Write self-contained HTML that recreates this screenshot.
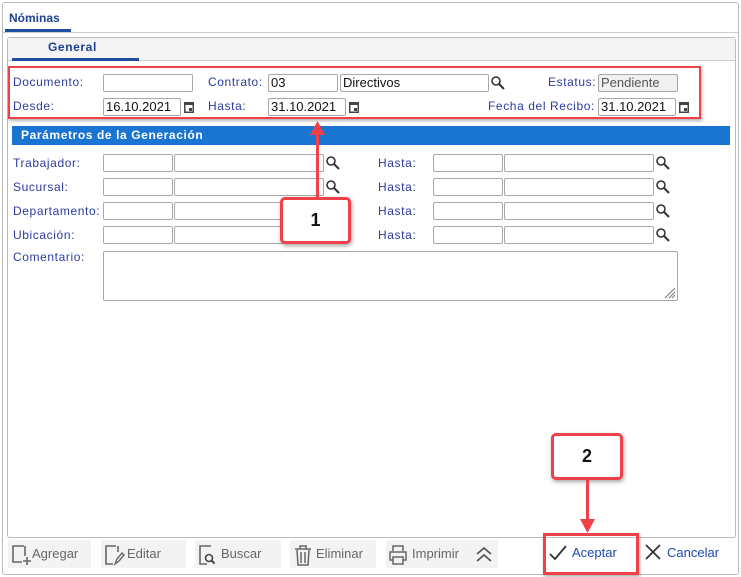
<!DOCTYPE html><html><head><style>
*{box-sizing:border-box;margin:0;padding:0}
body{width:741px;height:577px;background:#fff;position:relative;overflow:hidden;font-family:"Liberation Sans",sans-serif;font-size:12px}
.a{position:absolute}
.l{position:absolute;color:#2b3c9f;letter-spacing:0.6px;font-size:12px}
.i{position:absolute;border:1px solid #a8a8a8;border-radius:2px;background:#fff;height:18px;font-size:13px;padding-left:2px;line-height:16px;color:#111}
.btn{position:absolute;top:540px;height:28px;background:#f3f3f3;color:#666;font-size:13px;line-height:28px}
</style></head><body>
<div class="a" style="left:2px;top:2px;width:737px;height:573px;border:1px solid #bbb;border-radius:3px"></div>
<div class="a" style="left:9px;top:11px;font-weight:bold;color:#1f3f8f;font-size:12px">Nóminas</div>
<div class="a" style="left:5px;top:29px;width:66px;height:3px;background:#1f4ea0"></div>
<div class="a" style="left:3px;top:32px;width:735px;height:1px;background:#ccc"></div>
<div class="a" style="left:7px;top:37px;width:729px;height:501px;border:1px solid #bbb;border-radius:3px"></div>
<div class="a" style="left:8px;top:38px;width:727px;height:23px;background:#f4f4f4;border-bottom:1px solid #ccc"></div>
<div class="a" style="left:48px;top:40px;font-weight:bold;color:#1f3f8f;letter-spacing:0.6px">General</div>
<div class="a" style="left:12px;top:58px;width:127px;height:3px;background:#1f4ea0"></div>
<div class="a" style="left:8px;top:66px;width:693px;height:53px;border:2px solid #f04048;box-shadow:1px 2px 3px rgba(0,0,0,.3)"></div>
<div class="l" style="left:13px;top:75px">Documento:</div>
<div class="i" style="left:103px;top:74px;width:90px"></div>
<div class="l" style="left:208px;top:75px">Contrato:</div>
<div class="i" style="left:268px;top:74px;width:70px">03</div>
<div class="i" style="left:340px;top:74px;width:149px">Directivos</div>
<svg class="a" style="left:490px;top:75px" width="16" height="16"><circle cx="6" cy="6" r="4" fill="none" stroke="#333" stroke-width="1.6"/><path d="M9 9l5 5" stroke="#333" stroke-width="2"/></svg>
<div class="l" style="left:548px;top:75px">Estatus:</div>
<div class="i" style="left:598px;top:74px;width:80px;background:#f0f0f0;color:#555">Pendiente</div>
<div class="l" style="left:13px;top:99px">Desde:</div>
<div class="i" style="left:103px;top:98px;width:78px">16.10.2021</div>
<div class="l" style="left:208px;top:99px">Hasta:</div>
<div class="i" style="left:268px;top:98px;width:78px">31.10.2021</div>
<div class="l" style="left:488px;top:99px">Fecha del Recibo:</div>
<div class="i" style="left:598px;top:98px;width:78px">31.10.2021</div>
<svg class="a" style="left:183px;top:100px" width="12" height="14"><rect x="1" y="2" width="10" height="11" fill="#444"/><rect x="2.5" y="5" width="7" height="6.5" fill="#fff"/><rect x="6" y="8" width="3" height="3" fill="#444"/></svg>
<svg class="a" style="left:348px;top:100px" width="12" height="14"><rect x="1" y="2" width="10" height="11" fill="#444"/><rect x="2.5" y="5" width="7" height="6.5" fill="#fff"/><rect x="6" y="8" width="3" height="3" fill="#444"/></svg>
<svg class="a" style="left:678px;top:100px" width="12" height="14"><rect x="1" y="2" width="10" height="11" fill="#444"/><rect x="2.5" y="5" width="7" height="6.5" fill="#fff"/><rect x="6" y="8" width="3" height="3" fill="#444"/></svg>
<div class="a" style="left:12px;top:126px;width:718px;height:19px;background:#1a75d2;color:#fff;font-weight:bold;padding-left:9px;line-height:19px;letter-spacing:0.6px">Parámetros de la Generación</div>
<div class="l" style="left:13px;top:156px">Trabajador:</div>
<div class="l" style="left:13px;top:180px">Sucursal:</div>
<div class="l" style="left:13px;top:204px">Departamento:</div>
<div class="l" style="left:13px;top:228px">Ubicación:</div>
<div class="l" style="left:13px;top:250px">Comentario:</div>
<div class="i" style="left:103px;top:154px;width:70px"></div><div class="i" style="left:174px;top:154px;width:150px"></div>
<div class="i" style="left:103px;top:178px;width:70px"></div><div class="i" style="left:174px;top:178px;width:150px"></div>
<div class="i" style="left:103px;top:202px;width:70px"></div><div class="i" style="left:174px;top:202px;width:150px"></div>
<div class="i" style="left:103px;top:226px;width:70px"></div><div class="i" style="left:174px;top:226px;width:150px"></div>
<svg class="a" style="left:325px;top:155px" width="16" height="16"><circle cx="6" cy="6" r="4" fill="none" stroke="#333" stroke-width="1.6"/><path d="M9 9l5 5" stroke="#333" stroke-width="2"/></svg>
<svg class="a" style="left:325px;top:179px" width="16" height="16"><circle cx="6" cy="6" r="4" fill="none" stroke="#333" stroke-width="1.6"/><path d="M9 9l5 5" stroke="#333" stroke-width="2"/></svg>
<div class="l" style="left:378px;top:156px">Hasta:</div>
<div class="l" style="left:378px;top:180px">Hasta:</div>
<div class="l" style="left:378px;top:204px">Hasta:</div>
<div class="l" style="left:378px;top:228px">Hasta:</div>
<div class="i" style="left:433px;top:154px;width:70px"></div><div class="i" style="left:504px;top:154px;width:150px"></div>
<div class="i" style="left:433px;top:178px;width:70px"></div><div class="i" style="left:504px;top:178px;width:150px"></div>
<div class="i" style="left:433px;top:202px;width:70px"></div><div class="i" style="left:504px;top:202px;width:150px"></div>
<div class="i" style="left:433px;top:226px;width:70px"></div><div class="i" style="left:504px;top:226px;width:150px"></div>
<svg class="a" style="left:655px;top:155px" width="16" height="16"><circle cx="6" cy="6" r="4" fill="none" stroke="#333" stroke-width="1.6"/><path d="M9 9l5 5" stroke="#333" stroke-width="2"/></svg>
<svg class="a" style="left:655px;top:179px" width="16" height="16"><circle cx="6" cy="6" r="4" fill="none" stroke="#333" stroke-width="1.6"/><path d="M9 9l5 5" stroke="#333" stroke-width="2"/></svg>
<svg class="a" style="left:655px;top:203px" width="16" height="16"><circle cx="6" cy="6" r="4" fill="none" stroke="#333" stroke-width="1.6"/><path d="M9 9l5 5" stroke="#333" stroke-width="2"/></svg>
<svg class="a" style="left:655px;top:227px" width="16" height="16"><circle cx="6" cy="6" r="4" fill="none" stroke="#333" stroke-width="1.6"/><path d="M9 9l5 5" stroke="#333" stroke-width="2"/></svg>
<div class="i" style="left:103px;top:251px;width:575px;height:50px"></div>
<svg class="a" style="left:662px;top:285px" width="14" height="14"><path d="M13 3L3 13M13 7L7 13M13 10L10 13" stroke="#777"/></svg>
<!-- callout 1 -->
<div class="a" style="left:316px;top:134px;width:3px;height:64px;background:#f04048"></div>
<svg class="a" style="left:309px;top:120px" width="17" height="16"><path d="M8.5 1L16 15H1z" fill="#f04048"/></svg>
<div class="a" style="left:280px;top:197px;width:71px;height:47px;border:3px solid #f04048;border-radius:5px;background:#fff;box-shadow:1px 2px 4px rgba(0,0,0,.35);text-align:center;line-height:41px;font-weight:bold;font-size:18px;color:#111">1</div>
<!-- callout 2 -->
<div class="a" style="left:551px;top:433px;width:72px;height:47px;border:3px solid #f04048;border-radius:5px;background:#fff;box-shadow:1px 2px 4px rgba(0,0,0,.35);text-align:center;line-height:41px;font-weight:bold;font-size:18px;color:#111">2</div>
<div class="a" style="left:586px;top:480px;width:3px;height:40px;background:#f04048"></div>
<svg class="a" style="left:579px;top:518px" width="17" height="16"><path d="M1 1H16L8.5 15z" fill="#f04048"/></svg>
<!-- toolbar -->
<div class="btn" style="left:8px;width:83px"><svg class="a" style="left:2px;top:3px" width="22" height="24"><path d="M14 3H3v16h9" fill="none" stroke="#666" stroke-width="1.6"/><path d="M15 3v10M17 14v8M13 18h8" stroke="#666" stroke-width="1.6"/></svg><span class="a" style="left:24px">Agregar</span></div>
<div class="btn" style="left:101px;width:85px"><svg class="a" style="left:2px;top:3px" width="22" height="24"><path d="M13 3H3v18h7M15 3v6" fill="none" stroke="#666" stroke-width="1.6"/><path d="M12 21l2-5 5-6 2 2-5 6z" fill="none" stroke="#666" stroke-width="1.4"/></svg><span class="a" style="left:26px">Editar</span></div>
<div class="btn" style="left:195px;width:86px"><svg class="a" style="left:2px;top:3px" width="22" height="24"><path d="M14 3H3v18h7" fill="none" stroke="#666" stroke-width="1.6"/><circle cx="12" cy="15" r="3.5" fill="none" stroke="#444" stroke-width="1.6"/><path d="M14.5 17.5l3 3" stroke="#444" stroke-width="2"/></svg><span class="a" style="left:26px">Buscar</span></div>
<div class="btn" style="left:290px;width:86px"><svg class="a" style="left:2px;top:3px" width="22" height="24"><path d="M3 6h16M8 6V3h6v3M5 7l1 15h10l1-15M9 9v11M13 9v11" fill="none" stroke="#666" stroke-width="1.5"/></svg><span class="a" style="left:26px">Eliminar</span></div>
<div class="btn" style="left:386px;width:84px"><svg class="a" style="left:1px;top:3px" width="22" height="24"><path d="M6 8V3h10v5M6 17H3V9h16v8h-3M6 14h10v7H6z" fill="none" stroke="#666" stroke-width="1.5"/></svg><span class="a" style="left:26px">Imprimir</span></div>
<div class="btn" style="left:470px;width:28px"><svg class="a" style="left:4px;top:4px" width="20" height="20"><path d="M3 10l7-6 7 6M3 17l7-6 7 6" fill="none" stroke="#555" stroke-width="1.8"/></svg></div>
<svg class="a" style="left:548px;top:544px" width="20" height="18"><path d="M2 10l5 5L18 2" fill="none" stroke="#333" stroke-width="1.8"/></svg>
<div class="a" style="left:572px;top:545px;color:#1f48b0;font-size:13px">Aceptar</div>
<svg class="a" style="left:644px;top:543px" width="18" height="18"><path d="M2 2l14 14M16 2L2 16" stroke="#333" stroke-width="1.8"/></svg>
<div class="a" style="left:667px;top:545px;color:#1f48b0;font-size:13px">Cancelar</div>
<div class="a" style="left:543px;top:533px;width:96px;height:42px;border:3px solid #f04048;box-shadow:1px 2px 3px rgba(0,0,0,.3)"></div>
</body></html>
